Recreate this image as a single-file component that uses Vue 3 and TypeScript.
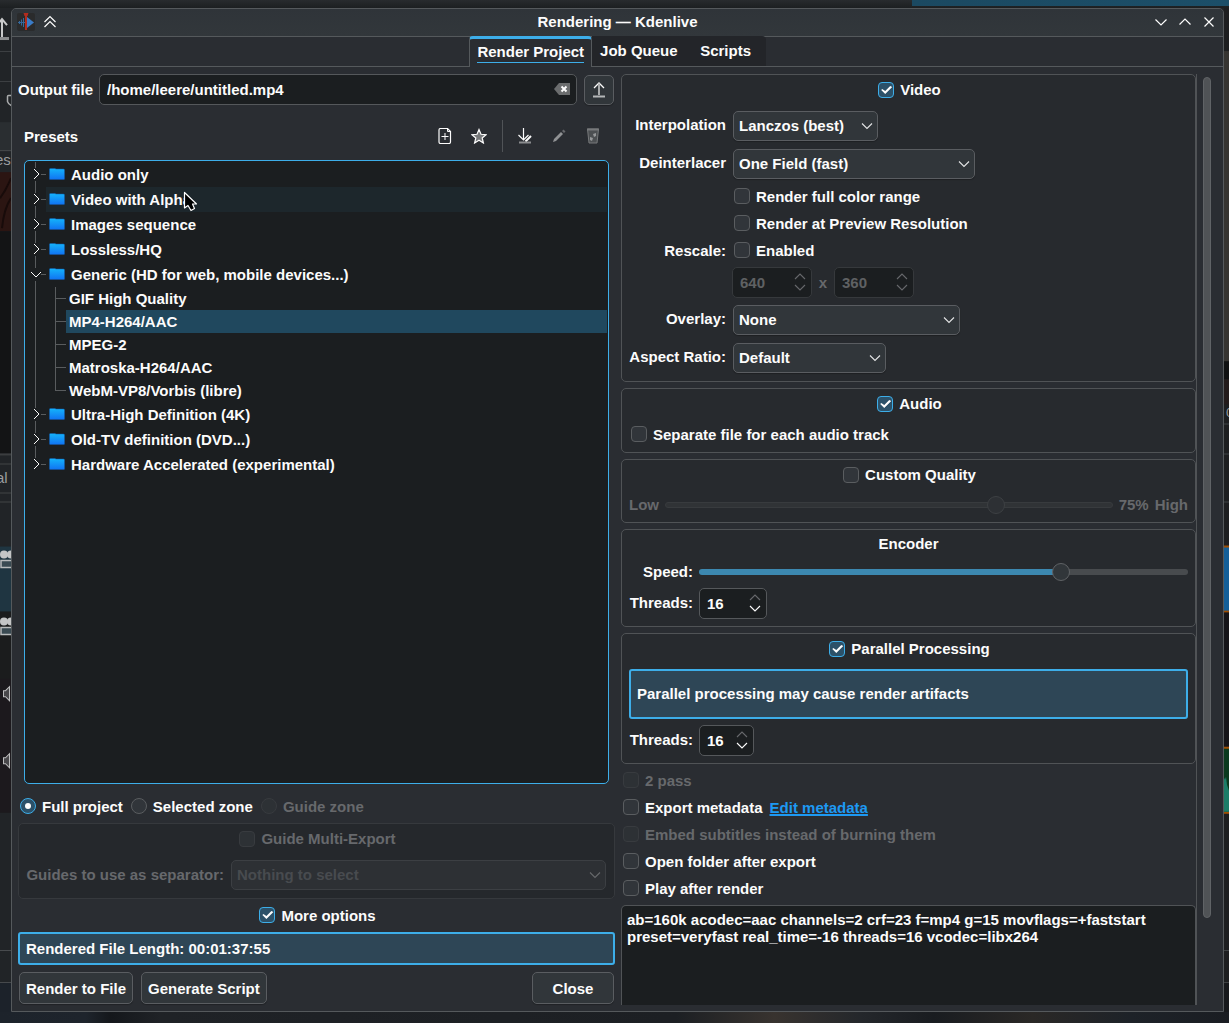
<script setup lang="ts">
import { ref } from 'vue'

interface Preset {
  name: string
  open?: boolean
  hovered?: boolean
  children?: string[]
}

const outputFile = ref('/home/leere/untitled.mp4')
const presets: Preset[] = [
  { name: 'Audio only' },
  { name: 'Video with Alpha', hovered: true },
  { name: 'Images sequence' },
  { name: 'Lossless/HQ' },
  {
    name: 'Generic (HD for web, mobile devices...)',
    open: true,
    children: ['GIF High Quality', 'MP4-H264/AAC', 'MPEG-2', 'Matroska-H264/AAC', 'WebM-VP8/Vorbis (libre)'],
  },
  { name: 'Ultra-High Definition (4K)' },
  { name: 'Old-TV definition (DVD...)' },
  { name: 'Hardware Accelerated (experimental)' },
]
const selectedPreset = ref('MP4-H264/AAC')

const zone = ref('full')
const moreOptions = ref(true)
const video = ref(true)
const audio = ref(true)
const parallel = ref(true)
const customQuality = ref(false)
const quality = ref(75)
const speed = ref(75)
const encoderThreads = ref(16)
const parallelThreads = ref(16)
const rescaleWidth = ref(640)
const rescaleHeight = ref(360)
const args = ref(
  'ab=160k acodec=aac channels=2 crf=23 f=mp4 g=15 movflags=+faststart preset=veryfast real_time=-16 threads=16 vcodec=libx264',
)
</script>

<template>
  <div class="desktop">
    <div class="edge-top"></div>

    <svg class="edge-left" viewBox="0 0 11 1003" preserveAspectRatio="xMinYMin slice" aria-hidden="true">
      <rect width="11" height="1003" fill="#212427" />
      <path d="M0 43.500h11M0 73.500h11" stroke="#3c3f42" />
      <path d="M2 11v18M-2 16l4 -5l5 6" stroke="#c9cacb" stroke-width="2" fill="none" />
      <rect y="29" width="9" height="3" fill="#8b8d8e" />
      <path d="M12 87.500H8.500q-1 0 -1 1v5q1 3 4 4" stroke="#a9abac" stroke-width="1.500" fill="none" />
      <rect y="114" width="11" height="28" fill="#2a2e31" />
      <path d="M0 142.500h11" stroke="#484b4e" />
      <text x="-5" y="157" class="edge-text">es</text>
      <rect y="164" width="11" height="59" fill="#2b1512" />
      <path d="M0 190q6 -8 11 -20M2 220q2 -20 9 -30" stroke="#180b0a" stroke-width="2" fill="none" />
      <rect y="223" width="11" height="222" fill="#131415" />
      <path d="M0 446h11" stroke="#3b3d3f" stroke-width="2" />
      <path d="M0 455.500h11M0 484.500h11M0 493.500h11" stroke="#424547" />
      <text x="-4" y="475" class="edge-text">al</text>
      <rect y="538" width="11" height="65" fill="#1f3541" />
      <rect y="603" width="11" height="67" fill="#1b1c1d" />
      <g v-for="y in [541, 608]" :key="y" :transform="`translate(0 ${y})`">
        <circle cx="4" cy="5" r="4" fill="#c4c5c6" />
        <circle cx="11" cy="5" r="4" fill="#c4c5c6" />
        <path d="M13 11H1v7h12" fill="#3a4a52" stroke="#b9bbbc" stroke-width="1.500" />
      </g>
      <rect y="670" width="11" height="134" fill="#1c191d" />
      <g v-for="y in [681, 748]" :key="y" :transform="`translate(0 ${y})`">
        <path d="M3.500 1h2l4 -4v14l-4 -4h-2z" fill="#48474a" stroke="#bdbdbe" />
      </g>
      <path d="M0 941.500h11M0 973.500h11" stroke="#484b4e" />
      <rect y="974" width="11" height="29" fill="#1c222a" />
    </svg>

    <main class="dialog">
      <header class="titlebar">
        <svg class="app-icon" viewBox="0 0 18 18" aria-hidden="true">
          <rect width="18" height="18" rx="2" fill="#2a2b2c" />
          <path d="M10 4l7 5.500l-7 5.500z" fill="#3a7cc8" />
          <path d="M6.500 5v9M4.500 6.500v6M2.500 8v3M1 9.500h8" stroke="#34699d" fill="none" />
          <path d="M6.500 0h5l-1 3h-.5v14H8V3h-.5z" fill="#b02c1f" />
        </svg>
        <button class="title-button" aria-label="Shade">
          <svg viewBox="0 0 16 16"><path d="M2.500 8L8 2.500L13.500 8M2.500 13L8 7.500L13.500 13" /></svg>
        </button>
        <h1>Rendering — Kdenlive</h1>
        <div class="window-buttons">
          <button class="title-button" aria-label="Minimize"><svg viewBox="0 0 16 16"><path d="M2.500 5.500L8 11L13.500 5.500" /></svg></button>
          <button class="title-button" aria-label="Maximize"><svg viewBox="0 0 16 16"><path d="M2.500 10.500L8 5L13.500 10.500" /></svg></button>
          <button class="title-button" aria-label="Close window"><svg viewBox="0 0 16 16"><path d="M3.500 3.500l9 9M12.500 3.500l-9 9" /></svg></button>
        </div>
      </header>

      <nav class="tabs" role="tablist">
        <button class="tab active" role="tab" aria-selected="true"><span>Render Project</span></button>
        <button class="tab" role="tab">Job Queue</button>
        <button class="tab last" role="tab">Scripts</button>
      </nav>

      <div class="body">
        <section class="left">
          <div class="output-row">
            <label for="output">Output file</label>
            <div class="line-edit">
              <input id="output" v-model="outputFile" type="text" />
              <button aria-label="Clear" @click="outputFile = ''">
                <svg width="16" height="12" viewBox="0 0 16 12">
                  <path d="M0 6L5 0h11v12H5z" fill="#6b6d6e" />
                  <path d="M7.500 3.500l5 5M12.500 3.500l-5 5" stroke="#fcfcfc" stroke-width="2" />
                </svg>
              </button>
            </div>
            <button class="push open-button" aria-label="Choose output file">
              <svg width="16" height="16" viewBox="0 0 16 16" fill="none" stroke="#fcfcfc">
                <path d="M3 6L8 1L13 6" stroke-width="1.300" />
                <path d="M8 1.500V13" stroke="#a8aaab" stroke-width="2" />
                <path d="M2 14.500h12" stroke="#b4b6b7" stroke-width="2" />
              </svg>
            </button>
          </div>

          <div class="presets">
            <div class="presets-bar">
              <span>Presets</span>
              <div class="toolbar">
                <button aria-label="New preset">
                  <svg viewBox="0 0 16 16" fill="none" stroke="#fcfcfc">
                    <path d="M3.500 .500h7l3 3V14q0 1.500 -1.500 1.500H3.500q-1.500 0 -1.500 -1.500V2q0 -1.500 1.500 -1.500z" stroke-width="1.200" />
                    <path d="M10.500 .500v3h3" />
                    <path d="M8 5v7M4.500 8.500h7" />
                  </svg>
                </button>
                <button aria-label="Favorite">
                  <svg viewBox="0 0 16 16">
                    <path d="M8 1.500l2 4.800l5 .4l-3.800 3.300l1.200 5L8 12.300L3.600 15l1.200 -5L1 6.700l5 -.4z" fill="#77797b" stroke="#fcfcfc" stroke-width="1.200" />
                  </svg>
                </button>
                <i class="separator"></i>
                <button aria-label="Save preset">
                  <svg viewBox="0 0 16 16" fill="none" stroke="#fcfcfc">
                    <path d="M6.500 0v12M1.500 7l5 5l5 -5" stroke-width="1.200" />
                    <path d="M8.500 13.500L14 8" stroke-width="2" />
                    <path d="M2 14.500h12" stroke="#8a8c8e" stroke-width="2" />
                  </svg>
                </button>
                <button aria-label="Edit preset">
                  <svg viewBox="0 0 16 16">
                    <path d="M2 14l1 -3L10 4l2 2l-7 7z" fill="#909294" />
                    <path d="M11 3l1.500 -1.500l2 2L13 5z" fill="#67696c" />
                  </svg>
                </button>
                <button aria-label="Delete preset">
                  <svg viewBox="0 0 16 16">
                    <path d="M2.500 1h11l-1.500 14h-8z" fill="#4c4f52" stroke="#77797b" />
                    <path d="M2 .5h12v2H2z" fill="#77797b" />
                    <path d="M8 6l3 -1v3l-2 1zM5 9l3 1l-1 3l-2 -1z" fill="#96989a" />
                  </svg>
                </button>
              </div>
            </div>

            <div class="tree" role="tree">
              <template v-for="(p, i) in presets" :key="p.name">
                <div class="row" role="treeitem" :aria-expanded="!!p.open">
                  <svg class="branch" viewBox="0 0 21 25">
                    <path :d="i === presets.length - 1 ? 'M10.500 0v6' : 'M10.500 0v6M10.500 19v6'" />
                    <path d="M16 12.500h5" />
                    <path class="arrow" :d="p.open ? 'M6 10l5 5l5 -5' : 'M9 7l5 5l-5 5'" />
                  </svg>
                  <div class="cell" :class="{ hovered: p.hovered }">
                    <svg class="folder" viewBox="0 0 16 12">
                      <defs>
                        <linearGradient id="folder-fill" x1="0" y1="0" x2="0" y2="1">
                          <stop offset="0" stop-color="#14b4fb" />
                          <stop offset="1" stop-color="#1173f2" />
                        </linearGradient>
                      </defs>
                      <path d="M.500 1q0 -.5 1 -.5h4.500l1 .5h7.500q1 0 1 1v9q0 .5 -1 .5h-13q-1 0 -1 -.5z" fill="url(#folder-fill)" stroke="#1259a8" stroke-width=".5" />
                    </svg>
                    {{ p.name }}
                    <svg v-if="p.hovered" class="cursor" width="16" height="22" viewBox="0 0 16 22">
                      <path d="M1.500 1.500V17l3.500 -2.500l3 5l3.500 -2l-2 -4.500h4z" fill="#000" stroke="#fff" stroke-width="1.200" stroke-linejoin="round" />
                    </svg>
                  </div>
                </div>
                <div v-for="(c, j) in p.children" :key="c" class="row child" role="treeitem" @click="selectedPreset = c">
                  <svg class="branch deep" viewBox="0 0 41 23">
                    <path d="M10.500 0v23M30.500 11.500h10.500" />
                    <path :d="j === p.children!.length - 1 ? 'M30.500 0v12' : 'M30.500 0v23'" />
                  </svg>
                  <div class="cell" :class="{ selected: c === selectedPreset }">{{ c }}</div>
                </div>
              </template>
            </div>
          </div>

          <div class="radios">
            <label class="check"><input v-model="zone" type="radio" name="zone" value="full" />Full project</label>
            <label class="check"><input v-model="zone" type="radio" name="zone" value="selected" />Selected zone</label>
            <label class="check disabled"><input type="radio" name="zone" value="guide" disabled />Guide zone</label>
          </div>

          <section class="group off">
            <label class="check title disabled"><input type="checkbox" disabled />Guide Multi-Export</label>
            <div class="form guides">
              <label for="guides" class="dim">Guides to use as separator:</label>
              <div class="combo">
                <select id="guides" disabled><option>Nothing to select</option></select>
                <svg viewBox="0 0 12 8"><path d="M1 1.500l5 5l5 -5" /></svg>
              </div>
            </div>
          </section>

          <label class="check centered"><input v-model="moreOptions" type="checkbox" />More options</label>
          <p class="message">Rendered File Length: 00:01:37:55</p>
          <footer class="actions">
            <button class="push">Render to File</button>
            <button class="push">Generate Script</button>
            <button class="push close">Close</button>
          </footer>
        </section>

        <section class="right">
          <div class="options">
            <section class="group">
              <label class="check title"><input v-model="video" type="checkbox" />Video</label>
              <div class="form video">
                <label for="interp">Interpolation</label>
                <div class="combo w-interp">
                  <select id="interp"><option>Lanczos (best)</option></select>
                  <svg viewBox="0 0 12 8"><path d="M1 1.500l5 5l5 -5" /></svg>
                </div>
                <label for="deint">Deinterlacer</label>
                <div class="combo w-deint">
                  <select id="deint"><option>One Field (fast)</option></select>
                  <svg viewBox="0 0 12 8"><path d="M1 1.500l5 5l5 -5" /></svg>
                </div>
                <label class="check second"><input type="checkbox" />Render full color range</label>
                <label class="check second"><input type="checkbox" />Render at Preview Resolution</label>
                <label for="rescale" class="level">Rescale:</label>
                <label class="check"><input id="rescale" type="checkbox" />Enabled</label>
                <div class="second size">
                  <div class="spin wide off">
                    <input v-model="rescaleWidth" type="number" aria-label="Width" disabled />
                    <div class="steps">
                      <button disabled aria-label="Increase"><svg viewBox="0 0 12 7"><path d="M1 6l5 -5l5 5" /></svg></button>
                      <button disabled aria-label="Decrease"><svg viewBox="0 0 12 7"><path d="M1 1l5 5l5 -5" /></svg></button>
                    </div>
                  </div>
                  <span class="times dim">x</span>
                  <div class="spin wide off">
                    <input v-model="rescaleHeight" type="number" aria-label="Height" disabled />
                    <div class="steps">
                      <button disabled aria-label="Increase"><svg viewBox="0 0 12 7"><path d="M1 6l5 -5l5 5" /></svg></button>
                      <button disabled aria-label="Decrease"><svg viewBox="0 0 12 7"><path d="M1 1l5 5l5 -5" /></svg></button>
                    </div>
                  </div>
                </div>
                <label for="overlay">Overlay:</label>
                <div class="combo w-overlay">
                  <select id="overlay"><option>None</option></select>
                  <svg viewBox="0 0 12 8"><path d="M1 1.500l5 5l5 -5" /></svg>
                </div>
                <label for="aspect">Aspect Ratio:</label>
                <div class="combo w-aspect">
                  <select id="aspect"><option>Default</option></select>
                  <svg viewBox="0 0 12 8"><path d="M1 1.500l5 5l5 -5" /></svg>
                </div>
              </div>
            </section>

            <section class="group">
              <label class="check title"><input v-model="audio" type="checkbox" />Audio</label>
              <label class="check"><input type="checkbox" />Separate file for each audio track</label>
            </section>

            <section class="group">
              <label class="check title"><input v-model="customQuality" type="checkbox" />Custom Quality</label>
              <div class="slider-row dim">
                <label for="quality">Low</label>
                <input id="quality" v-model="quality" type="range" disabled />
                <span>{{ quality }}%</span>
                <span>High</span>
              </div>
            </section>

            <section class="group">
              <h2>Encoder</h2>
              <div class="form narrow">
                <label for="speed">Speed:</label>
                <div class="slider-row">
                  <input id="speed" v-model="speed" type="range" :style="{ '--fill': speed + '%' }" />
                </div>
                <label for="enc-threads">Threads:</label>
                <div class="spin medium">
                  <input id="enc-threads" v-model="encoderThreads" type="number" max="16" />
                  <div class="steps">
                    <button disabled aria-label="Increase"><svg viewBox="0 0 12 7"><path d="M1 6l5 -5l5 5" /></svg></button>
                    <button aria-label="Decrease" @click="encoderThreads--"><svg viewBox="0 0 12 7"><path d="M1 1l5 5l5 -5" /></svg></button>
                  </div>
                </div>
              </div>
            </section>

            <section class="group">
              <label class="check title"><input v-model="parallel" type="checkbox" />Parallel Processing</label>
              <p class="message tall">Parallel processing may cause render artifacts</p>
              <div class="form narrow">
                <label for="par-threads">Threads:</label>
                <div class="spin small">
                  <input id="par-threads" v-model="parallelThreads" type="number" max="16" />
                  <div class="steps">
                    <button disabled aria-label="Increase"><svg viewBox="0 0 12 7"><path d="M1 6l5 -5l5 5" /></svg></button>
                    <button aria-label="Decrease" @click="parallelThreads--"><svg viewBox="0 0 12 7"><path d="M1 1l5 5l5 -5" /></svg></button>
                  </div>
                </div>
              </div>
            </section>

            <label class="check disabled"><input type="checkbox" disabled />2 pass</label>
            <div class="metadata">
              <label class="check"><input type="checkbox" />Export metadata</label>
              <a href="#">Edit metadata</a>
            </div>
            <label class="check disabled"><input type="checkbox" disabled />Embed subtitles instead of burning them</label>
            <label class="check"><input type="checkbox" />Open folder after export</label>
            <label class="check"><input type="checkbox" />Play after render</label>
            <textarea v-model="args" aria-label="Render arguments" spellcheck="false"></textarea>
          </div>
          <div class="scrollbar"><div class="thumb"></div></div>
        </section>
      </div>
    </main>

    <svg class="edge-right" viewBox="0 0 5 1003" preserveAspectRatio="xMinYMin slice" aria-hidden="true">
      <rect width="5" height="1003" fill="#1d1e20" />
      <rect y="43" width="5" height="310" fill="#363431" />
      <rect y="353" width="5" height="18" fill="#101112" />
      <rect y="371" width="5" height="25" fill="#231b1b" />
      <text x="2" y="409" class="edge-text small">0</text>
      <path d="M0 415.500h5M0 445.500h5M0 493.500h5M0 941.500h5M0 973.500h5" stroke="#3f4244" />
      <rect y="537" width="5" height="67" fill="#a04f04" />
      <rect y="539" width="5" height="63" fill="#145f98" />
      <rect y="604" width="5" height="134" fill="#151418" />
      <rect y="738" width="5" height="67" fill="#a04f04" />
      <rect y="740" width="5" height="63" fill="#0b3a1e" />
      <path d="M0 769l1 2l1 -3l1 8l2 6V803H0z" fill="#1c7d68" />
      <rect y="974" width="5" height="29" fill="#17191c" />
    </svg>

    <div class="edge-bottom"></div>
  </div>
</template>

<style>
body {
  margin: 0;
  background: #1c1e20;
}
</style>

<style scoped>
.desktop,
.desktop * {
  box-sizing: border-box;
}

.desktop {
  display: grid;
  grid-template-columns: 11px minmax(0, 1fr) 5px;
  grid-template-rows: 8px 1fr 11px;
  min-height: 100vh;
  font: bold 15px/17px 'Liberation Sans', Arial, sans-serif;
  color: #fcfcfc;
  background: #212427;
}

button,
input,
select,
textarea {
  font: inherit;
  color: inherit;
  margin: 0;
}

h1,
h2,
p {
  margin: 0;
  font: inherit;
}

.edge-top {
  grid-column: 1 / -1;
  background:
    linear-gradient(90deg, #1b4961, #1c4f69) 100% 0 / 317px 6px no-repeat,
    linear-gradient(#282b2e, #1c1f21);
}

.edge-bottom {
  grid-column: 1 / -1;
  background: linear-gradient(90deg, #1d232b, #1e242c 7%, #14171b 9%, #1f2226 13%, #1c1f23 55%, #38332f 63%, #24272b 70%, #191c20 76%, #2a2826 84%, #1d2228 92%, #1a1d22);
}

.edge-left,
.edge-right {
  width: 100%;
  height: 100%;
  min-height: 0;
  contain: size;
}

.edge-text {
  font: 15px 'Liberation Sans', Arial, sans-serif;
  fill: #9b9d9f;
}

.edge-text.small {
  font-size: 13px;
}

.dialog {
  display: flex;
  flex-direction: column;
  border: 1px solid #55595c;
  border-radius: 5px 5px 0 0;
  background: #2a2d32;
  overflow: hidden;
}

.titlebar {
  display: grid;
  grid-template-columns: 18px 16px 1fr 64px;
  gap: 7px;
  align-items: center;
  height: 28px;
  padding: 0 6px 2px 5px;
  background: linear-gradient(#2f3439, #32373b);
  border-bottom: 1px solid #55595c;
}

.titlebar h1 {
  text-align: center;
  padding-left: 24px;
}

.app-icon {
  width: 18px;
  height: 18px;
}

.title-button {
  display: flex;
  width: 16px;
  height: 16px;
  padding: 0;
  border: 0;
  background: none;
}

.title-button svg {
  width: 16px;
  height: 16px;
  fill: none;
  stroke: #fcfcfc;
  stroke-width: 1.2;
}

.window-buttons {
  display: flex;
  gap: 8px;
}

.tabs {
  display: flex;
  justify-content: center;
  height: 30px;
  border-bottom: 1px solid #55595c;
}

.tab {
  display: flex;
  justify-content: center;
  align-items: center;
  height: 30px;
  padding: 0 8px 2px;
  margin-top: -1px;
  border: 0;
  background: #232529;
}

.tab.active {
  height: 31px;
  padding: 0 7px;
  border: 1px solid #55595c;
  border-top: 3px solid #3daee9;
  border-bottom: 0;
  border-radius: 4px 4px 0 0;
  background: #2a2d32;
}

.tab.active span {
  padding-bottom: 2px;
  border-bottom: 1px solid #3daee9;
}

.tab.last {
  min-width: 80px;
  border-radius: 0 4px 0 0;
}

.body {
  flex: 1;
  display: grid;
  grid-template-columns: minmax(0, 1fr) minmax(0, 1fr);
  gap: 6px;
  padding: 7px 5px 6px 6px;
}

.left {
  display: flex;
  flex-direction: column;
  gap: 6px;
}

.output-row {
  display: flex;
  align-items: flex-start;
  gap: 6px;
  height: 32px;
}

.output-row label {
  width: 75px;
  line-height: 32px;
}

.line-edit {
  flex: 1;
  display: flex;
  align-items: center;
  height: 31px;
  padding: 0 6px 0 7px;
  border: 1px solid #55585b;
  border-radius: 5px;
  background: #1b1e20;
}

.line-edit input {
  flex: 1;
  min-width: 0;
  padding: 0;
  border: 0;
  outline: 0;
  background: none;
}

.line-edit button {
  display: flex;
  padding: 0 0 2px;
  border: 0;
  background: none;
}

.push {
  height: 32px;
  margin: 1px;
  padding: 0 6px;
  border: 1px solid #5a5d61;
  border-radius: 5px;
  background: #31363a;
  box-shadow: 0 1px 1px rgba(0, 0, 0, 0.25);
}

.open-button {
  display: flex;
  justify-content: center;
  align-items: center;
  width: 30px;
  height: 30px;
  padding: 0;
}

.presets {
  flex: 1;
  display: flex;
  flex-direction: column;
  margin: 0 6px 6px;
}

.presets-bar {
  display: flex;
  justify-content: space-between;
  align-items: center;
  height: 48px;
}

.toolbar {
  display: flex;
  margin-right: -1px;
}

.toolbar button {
  display: flex;
  justify-content: center;
  align-items: center;
  width: 34px;
  height: 34px;
  padding: 0;
  border: 0;
  background: none;
}

.toolbar svg {
  width: 16px;
  height: 16px;
}

.separator {
  width: 1px;
  height: 32px;
  margin: 1px 5px 1px 6px;
  background: #505357;
}

.tree {
  flex: 1;
  padding: 1px;
  padding-left: 0;
  border: 1px solid #3daee9;
  border-radius: 5px;
  background: #1b1e20;
}

.row {
  display: flex;
  height: 25px;
}

.row.child {
  height: 23px;
}

.branch {
  flex: none;
  width: 21px;
  height: 25px;
  fill: none;
  stroke: #595c5e;
}

.branch.deep {
  width: 41px;
  height: 23px;
}

.branch .arrow {
  stroke: #fcfcfc;
}

.cell {
  position: relative;
  flex: 1;
  display: flex;
  align-items: center;
  gap: 6px;
  padding-left: 3px;
}

.cell.hovered {
  background: #1d272c;
}

.cell.selected {
  background: #20485e;
}

.folder {
  width: 16px;
  height: 12px;
  margin-bottom: 2px;
}

.cursor {
  position: absolute;
  left: 137px;
  top: 4px;
}

.radios {
  display: flex;
  gap: 6px;
}

.check {
  display: flex;
  align-items: center;
  gap: 6px;
  height: 21px;
  padding: 0 0 1px 2px;
}

.check input {
  appearance: none;
  position: relative;
  flex: none;
  width: 16px;
  height: 16px;
  border: 1px solid #5a5d60;
  border-radius: 4px;
  background: #31353a;
}

.check input[type='radio'] {
  border-radius: 50%;
}

.check input:checked {
  border-color: #3daee9;
  background: #2c5169;
}

.check input:checked::after {
  content: '';
  position: absolute;
  inset: -1px;
  background: #fcfcfc;
  clip-path: polygon(3px 8px, 4px 7px, 7px 9px, 12px 4px, 14px 5px, 7px 12px);
}

.check input[type='radio']:checked::after {
  inset: 4px;
  border-radius: 50%;
  clip-path: none;
}

.check.disabled {
  color: #67696c;
}

.check.disabled input {
  border-color: #383b3f;
  background: #2d3135;
}

.check.centered,
.check.title {
  align-self: center;
}

.check.title {
  align-items: flex-start;
  height: 20px;
  padding-top: 1px;
  padding-bottom: 0;
  margin-bottom: 4px;
}

.check.title input {
  margin-top: 1px;
}

.group {
  display: flex;
  flex-direction: column;
  gap: 6px;
  padding: 5px 7px 7px;
  border: 1px solid #505356;
  border-radius: 5px;
  background: #272a2e;
}

.group.off {
  border-color: #36393d;
  background: #25282c;
}

.group h2 {
  margin-bottom: 4px;
  text-align: center;
}

.dim {
  color: #67696c;
}

.form {
  display: grid;
  gap: 6px;
  align-items: center;
}

.form > label:not(.check) {
  padding-bottom: 2px;
  text-align: right;
  white-space: nowrap;
}

.form.video > label:not(.check) {
  padding-bottom: 3px;
}

.form.video > .level:not(.check) {
  padding-bottom: 0;
}

.form.video {
  grid-template-columns: 97px minmax(0, 1fr);
}

.form.narrow {
  grid-template-columns: 64px minmax(0, 1fr);
}

.form.guides {
  grid-template-columns: 198px minmax(0, 1fr);
}

.second {
  grid-column: 2;
}

.size {
  display: flex;
  align-items: center;
  gap: 6px;
}

.times {
  width: 10px;
  text-align: center;
}

.combo {
  position: relative;
  padding: 1px;
}

.combo select {
  appearance: none;
  display: block;
  width: 100%;
  height: 30px;
  padding: 0 24px 1px 5px;
  border: 1px solid #5a5d61;
  border-radius: 5px;
  background: #31363a;
  box-shadow: 0 1px 1px rgba(0, 0, 0, 0.25);
}

.combo select:disabled {
  opacity: 1;
  color: #484b4f;
  border-color: #3c3f43;
  background: #2d3034;
  box-shadow: none;
}

.combo svg {
  position: absolute;
  right: 6px;
  top: 12px;
  width: 12px;
  height: 8px;
  fill: none;
  stroke: #e4e5e6;
  stroke-width: 1.1;
  pointer-events: none;
}

.combo select:disabled + svg {
  stroke: #67696c;
}

.w-interp {
  width: 147px;
}

.w-deint {
  width: 244px;
}

.w-overlay {
  width: 229px;
}

.w-aspect {
  width: 155px;
}

.spin {
  display: flex;
  align-items: center;
  height: 31px;
  padding: 0 5px 0 7px;
  border: 1px solid #55585b;
  border-radius: 5px;
  background: #1b1e20;
}

.spin.off {
  border-color: #36393c;
  color: #5f6163;
}

.spin.wide {
  width: 80px;
}

.spin.medium {
  width: 68px;
}

.spin.small {
  width: 55px;
}

.spin input {
  appearance: textfield;
  flex: 1;
  min-width: 0;
  padding: 0;
  border: 0;
  outline: 0;
  background: none;
}

.spin input::-webkit-inner-spin-button {
  appearance: none;
  margin: 0;
}

.steps {
  display: flex;
  flex-direction: column;
  gap: 4px;
  padding-bottom: 2px;
}

.steps button {
  display: flex;
  padding: 0;
  border: 0;
  background: none;
}

.steps svg {
  width: 12px;
  height: 7px;
  fill: none;
  stroke: #fcfcfc;
  stroke-width: 1.1;
}

.steps button:disabled svg {
  stroke: #67696c;
}

.slider-row {
  display: flex;
  align-items: center;
  gap: 6px;
  height: 20px;
}

.slider-row label,
.slider-row span {
  padding-bottom: 1px;
}

.slider-row input {
  --fill: 0%;
  appearance: none;
  flex: 1;
  min-width: 0;
  height: 18px;
  background: none;
}

.slider-row input::-webkit-slider-runnable-track {
  height: 6px;
  border: 1px solid #5a5d60;
  border-radius: 3px;
  background: #484b4e;
}

.slider-row input:not(:disabled)::-webkit-slider-runnable-track {
  background: linear-gradient(90deg, #3c88b0 var(--fill), #484b4e var(--fill)) border-box;
  border-color: transparent;
}

.slider-row input::-webkit-slider-thumb {
  appearance: none;
  width: 18px;
  height: 18px;
  margin-top: -7px;
  border: 1px solid #5f6265;
  border-radius: 50%;
  background: #31363a;
}

.slider-row input:disabled::-webkit-slider-runnable-track {
  border-color: #383b3e;
  background: #303336;
}

.slider-row input:disabled::-webkit-slider-thumb {
  border-color: #3d4043;
  background: #2d3034;
}

.message {
  height: 33px;
  padding: 0 6px;
  border: 2px solid #3daee9;
  border-radius: 3px;
  line-height: 29px;
  background: #2e4656;
}

.message.tall {
  height: 50px;
  line-height: 46px;
}

.actions {
  display: flex;
  gap: 6px;
}

.actions .close {
  width: 82px;
  margin-left: auto;
}

.right {
  display: grid;
  grid-template-columns: minmax(0, 1fr) 21px;
}

.options {
  display: flex;
  flex-direction: column;
  gap: 6px;
  border-right: 1px solid #505356;
}

.metadata {
  display: flex;
  gap: 7px;
}

.metadata a {
  color: #1d99f3;
  line-height: 21px;
  text-decoration-thickness: 2px;
  text-underline-offset: 1px;
  text-decoration-skip-ink: none;
}

.options textarea {
  flex: 1;
  min-height: 60px;
  padding: 5px;
  border: 1px solid #505356;
  border-bottom: 0;
  border-radius: 5px 5px 0 0;
  outline: 0;
  resize: none;
  overflow: hidden;
  background: #1b1e20;
}

.scrollbar {
  display: flex;
  flex-direction: column;
  padding: 3px 0 3px 6px;
}

.scrollbar::after {
  content: '';
  flex: 1;
}

.thumb {
  flex: 10;
  width: 8px;
  border: 1px solid #606366;
  border-radius: 4px;
  background: #505356;
}
</style>
